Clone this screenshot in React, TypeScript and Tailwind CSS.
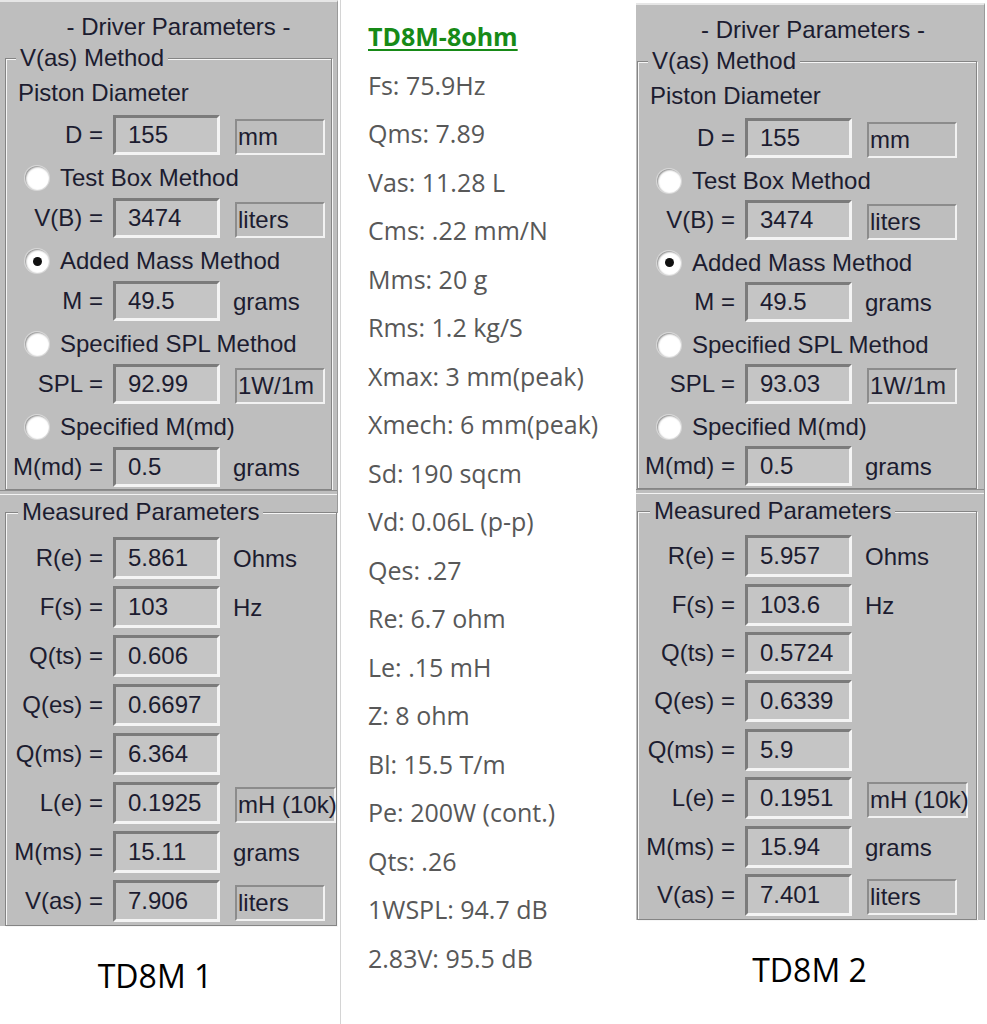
import React from "react";

const ui = "font-['Liberation_Sans',Arial,sans-serif] text-[24px] text-[#1c1c30]";

type Unit = { text: string; box?: "std" | "wide" };
type Row = { label: string; value: string; unit?: Unit };
type Method = { title: string; checked: boolean; row: Row };

type Driver = {
  d: Row;
  methods: Method[];
  measured: Row[];
};

const td1: Driver = {
  d: { label: "D =", value: "155", unit: { text: "mm", box: "std" } },
  methods: [
    { title: "Test Box Method", checked: false, row: { label: "V(B) =", value: "3474", unit: { text: "liters", box: "std" } } },
    { title: "Added Mass Method", checked: true, row: { label: "M =", value: "49.5", unit: { text: "grams" } } },
    { title: "Specified SPL Method", checked: false, row: { label: "SPL =", value: "92.99", unit: { text: "1W/1m", box: "std" } } },
    { title: "Specified M(md)", checked: false, row: { label: "M(md) =", value: "0.5", unit: { text: "grams" } } },
  ],
  measured: [
    { label: "R(e) =", value: "5.861", unit: { text: "Ohms" } },
    { label: "F(s) =", value: "103", unit: { text: "Hz" } },
    { label: "Q(ts) =", value: "0.606" },
    { label: "Q(es) =", value: "0.6697" },
    { label: "Q(ms) =", value: "6.364" },
    { label: "L(e) =", value: "0.1925", unit: { text: "mH (10k)", box: "wide" } },
    { label: "M(ms) =", value: "15.11", unit: { text: "grams" } },
    { label: "V(as) =", value: "7.906", unit: { text: "liters", box: "std" } },
  ],
};

const td2: Driver = {
  d: { label: "D =", value: "155", unit: { text: "mm", box: "std" } },
  methods: [
    { title: "Test Box Method", checked: false, row: { label: "V(B) =", value: "3474", unit: { text: "liters", box: "std" } } },
    { title: "Added Mass Method", checked: true, row: { label: "M =", value: "49.5", unit: { text: "grams" } } },
    { title: "Specified SPL Method", checked: false, row: { label: "SPL =", value: "93.03", unit: { text: "1W/1m", box: "std" } } },
    { title: "Specified M(md)", checked: false, row: { label: "M(md) =", value: "0.5", unit: { text: "grams" } } },
  ],
  measured: [
    { label: "R(e) =", value: "5.957", unit: { text: "Ohms" } },
    { label: "F(s) =", value: "103.6", unit: { text: "Hz" } },
    { label: "Q(ts) =", value: "0.5724" },
    { label: "Q(es) =", value: "0.6339" },
    { label: "Q(ms) =", value: "5.9" },
    { label: "L(e) =", value: "0.1951", unit: { text: "mH (10k)", box: "wide" } },
    { label: "M(ms) =", value: "15.94", unit: { text: "grams" } },
    { label: "V(as) =", value: "7.401", unit: { text: "liters", box: "std" } },
  ],
};

const specs = [
  "Fs: 75.9Hz",
  "Qms: 7.89",
  "Vas: 11.28 L",
  "Cms: .22 mm/N",
  "Mms: 20 g",
  "Rms: 1.2 kg/S",
  "Xmax: 3 mm(peak)",
  "Xmech: 6 mm(peak)",
  "Sd: 190 sqcm",
  "Vd: 0.06L (p-p)",
  "Qes: .27",
  "Re: 6.7 ohm",
  "Le: .15 mH",
  "Z: 8 ohm",
  "Bl: 15.5 T/m",
  "Pe: 200W (cont.)",
  "Qts: .26",
  "1WSPL: 94.7 dB",
  "2.83V: 95.5 dB",
];

function UnitCell({ unit }: { unit?: Unit }) {
  if (!unit) return null;
  if (!unit.box) return <span className="ml-[13px] mt-[2px]">{unit.text}</span>;
  return (
    <div
      className={`ml-[15px] mt-[4px] h-[36px] flex items-center pl-[1px] leading-none border-2 border-t-[#8c8c8c] border-l-[#8c8c8c] border-b-[#f2f2f2] border-r-[#f2f2f2] ${
        unit.box === "wide" ? "w-[101px] whitespace-nowrap" : "w-[90px]"
      }`}
    >
      {unit.text}
    </div>
  );
}

function FieldRow({ row, rowH, boxH }: { row: Row; rowH: string; boxH: string }) {
  return (
    <div className={`flex items-center ${rowH}`}>
      <div className="w-[107px] shrink-0 pr-[10px] text-right whitespace-nowrap">{row.label}</div>
      <div
        className={`w-[107px] shrink-0 ${boxH} flex items-center pl-[12px] bg-[#c5c5c5] border-[3px] border-t-[#7b7b7b] border-l-[#7b7b7b] border-b-[#f4f4f4] border-r-[#f4f4f4]`}
      >
        {row.value}
      </div>
      <UnitCell unit={row.unit} />
    </div>
  );
}

function Radio({ checked, title, h }: { checked: boolean; title: string; h: string }) {
  return (
    <div className={`flex items-center pt-[3px] ${h}`}>
      <span className="ml-[19px] w-[24px] h-[24px] rounded-full bg-white shadow-[inset_1px_1px_2px_#8d8d8d,0_0_0_1px_#d8d8d8] flex items-center justify-center">
        {checked && <span className="w-[9px] h-[9px] rounded-full bg-[#111]" />}
      </span>
      <span className="ml-[11px]">{title}</span>
    </div>
  );
}

type Variant = {
  width: string;
  titlePad: string;
  fieldsetX: string;
  radioH: string;
  measuredH: string;
};

function Panel({ data, v }: { data: Driver; v: Variant }) {
  const etched =
    "border border-[#858585] shadow-[inset_1px_1px_0_#f6f6f6,1px_1px_0_#f6f6f6]";
  return (
    <div className={`${v.width} bg-[#bebebe] ${ui} flex flex-col border-t-2 border-t-[#e6e6e6] border-r border-r-[#9a9a9a]`}>
      <div className={`h-[43px] flex items-center justify-center pt-[6px] ${v.titlePad}`}>- Driver Parameters -</div>
      <fieldset className={`${etched} ${v.fieldsetX}`}>
        <legend className="ml-[10px] px-[4px] leading-[26px] bg-[#bebebe]">V(as) Method</legend>
        <div className="pt-[2px]">
          <div className="h-[40px] flex items-center ml-[12px]">Piston Diameter</div>
          <FieldRow row={data.d} rowH="h-[44px]" boxH="h-[40px]" />
          {data.methods.map((m) => (
            <div key={m.title}>
              <Radio checked={m.checked} title={m.title} h={v.radioH} />
              <FieldRow row={m.row} rowH="h-[44px]" boxH="h-[40px]" />
            </div>
          ))}
        </div>
      </fieldset>
      <div className="h-[5px] border-t border-t-[#8d8d8d] border-b border-b-[#f3f3f3]" />
      <fieldset className={`${etched} ${v.fieldsetX} mt-[4px]`}>
        <legend className="ml-[12px] px-[4px] leading-[26px] bg-[#bebebe]">Measured Parameters</legend>
        <div className="pt-[8px]">
          {data.measured.map((r) => (
            <FieldRow key={r.label} row={r} rowH={v.measuredH} boxH="h-[42px]" />
          ))}
        </div>
      </fieldset>
    </div>
  );
}

export default function App() {
  return (
    <div className="w-[987px] h-[1024px] bg-white flex overflow-hidden">
      <div className="w-[340px] shrink-0 flex flex-col">
        <Panel
          data={td1}
          v={{ width: "w-[338px]", titlePad: "pl-[20px]", fieldsetX: "ml-[5px] mr-[5px]", radioH: "h-[39px]", measuredH: "h-[49px]" }}
        />
        <div className="mt-[30px] text-center leading-[40px] text-[32px] text-black font-['Open_Sans',sans-serif] pr-[30px]">
          TD8M 1
        </div>
      </div>

      <div className="w-[296px] shrink-0 bg-white border-l border-l-[#d4d4d4] pl-[27px] pt-[12px] font-['Open_Sans',sans-serif] text-[25px] leading-[48.5px] text-[#585858]">
        <div className="font-bold text-[#178a17] underline decoration-2 underline-offset-[3px]">TD8M-8ohm</div>
        {specs.map((s) => (
          <div key={s} className="whitespace-nowrap">{s}</div>
        ))}
      </div>

      <div className="w-[351px] shrink-0 flex flex-col pt-[3px]">
        <Panel
          data={td2}
          v={{ width: "w-[349px]", titlePad: "pl-[6px]", fieldsetX: "ml-[1px] mr-[7px]", radioH: "h-[38px]", measuredH: "h-[48.4px]" }}
        />
        <div className="mt-[30px] text-center leading-[40px] text-[32px] text-black font-['Open_Sans',sans-serif] pr-[4px]">
          TD8M 2
        </div>
      </div>
    </div>
  );
}
